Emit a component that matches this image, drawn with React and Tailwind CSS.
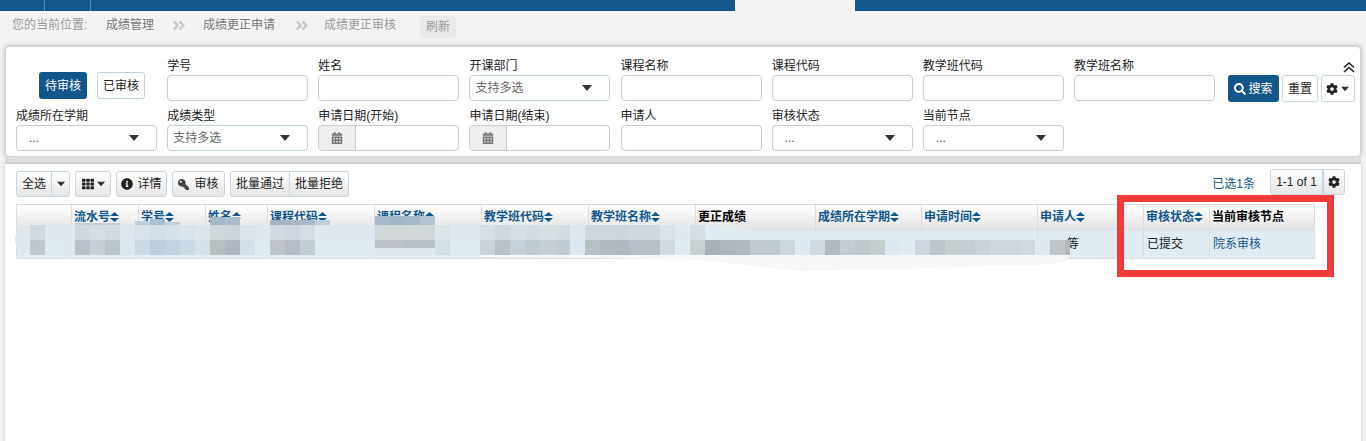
import React from 'react';
import { FaAngleDoubleRight, FaCalendarAlt, FaCog, FaInfoCircle, FaKey, FaSearch, FaTh } from 'react-icons/fa';

const columns = [
  { w: 55 },
  { w: 67, title: '流水号', sort: true },
  { w: 67, title: '学号', sort: true },
  { w: 62, title: '姓名', sort: true },
  { w: 107, title: '课程代码', sort: true },
  { w: 107, title: '课程名称', sort: true },
  { w: 107, title: '教学班代码', sort: true },
  { w: 107, title: '教学班名称', sort: true },
  { w: 120, title: '更正成绩' },
  { w: 106, title: '成绩所在学期', sort: true },
  { w: 116, title: '申请时间', sort: true },
  { w: 106, title: '申请人', sort: true },
  { w: 66, title: '审核状态', sort: true },
  { w: 105, title: '当前审核节点' },
];

// mosaic that hides the personal data, one colour per 15px block, starting at x=30
const mosaic = [
  '#bfc7ca', '#dfeaf1', '#e0e9ef', '#b9c1cb', '#c5cfd5', '#bcc4cc', '#dbe7ef', '#cbd9e2', '#bdcfdc', '#c2d4df',
  '#c9dae5', '#d5e0e8', '#b8bfc1', '#b0b8c2', '#d3dfe8', '#e0eaf1', '#bfc3cc', '#b6bcc9', '#c3ced4', '#e0eaf1',
  '#e0eaf1', '#e0eaf1', '#e0eaf1', '#bcc2c8', '#bcc2c8', '#b8bec5', '#b8c0c6', '#d5dfe6', '#e0eaf1', '#e0eaf1',
  '#c9d2d9', '#b9c1c9', '#c5d0d9', '#bfcad3', '#c6d0d2', '#c2cbd3', '#dce8ef',
  '#b8c0c3', '#b2bdc3', '#b0babe', '#b8bfca', '#b8c0c6', '#cfdae1', '#e0ebf2', '#c7d1d3', '#a9b1b8', '#b0b8be',
  '#b3bbc2', '#c2cbd1', '#c0cbd1', '#cdd7dc', '#deeaf1', '#d0d9e0', '#b4bbc3', '#c2ccd4', '#c0c9d0', '#c5cdce',
  '#deeaf1', '#e0ebf2', '#cdd6de', '#bcc6cc', '#c5ced1', '#c5ced4', '#c8d2d8', '#cdd7dd', '#ccd6dc', '#cfd9df',
  '#dfe9f0', '#bfc5c8', '#b2b7bd',
];

const mix = (hex) => {
  const ch = [1, 3, 5].map((i) => parseInt(hex.slice(i, i + 2), 16));
  const base = [224, 231, 237];
  return `rgb(${ch.map((c, i) => Math.round(c * 0.4 + base[i] * 0.6)).join(',')})`;
};

const headerBlocks = [
  [75, 223, 45, 2, '#c3d0da'],
  [135, 221, 15, 4, '#bccfdb'],
  [150, 219, 15, 6, '#a9bfcd'],
  [165, 222, 15, 3, '#c3d3de'],
  [180, 225, 15, 0, '#dfe6ec'],
  [210, 217, 15, 8, '#a5b8c6'],
  [225, 217, 15, 8, '#acbcca'],
  [270, 220, 15, 5, '#a3b4c4'],
  [285, 220, 15, 5, '#a7b7c6'],
  [300, 220, 15, 5, '#a9b8c6'],
  [315, 220, 15, 5, '#bfced8'],
  [375, 216, 15, 9, '#a9bac8'],
  [390, 216, 15, 9, '#a0b5c6'],
  [405, 216, 15, 9, '#a7b9c6'],
  [420, 216, 15, 9, '#b3c4ce'],
];

function Caret({ className = '' }) {
  return (
    <svg width="10" height="6" viewBox="0 0 12 7" className={className}>
      <polygon points="0,0 12,0 6,7" fill="#333" />
    </svg>
  );
}

function SortIcon() {
  return (
    <svg width="9" height="10" viewBox="0 0 9 10" className="shrink-0">
      <polygon points="4.5,0 9,4 0,4" fill="#12568a" />
      <polygon points="0,6 9,6 4.5,10" fill="#12568a" />
    </svg>
  );
}

function Field({ label, children }) {
  return (
    <div className="h-[44px]">
      <div className="h-[18px] text-[12px] leading-[18px] text-[#222]">{label}</div>
      {children}
    </div>
  );
}

function TextInput() {
  return <div className="h-[26px] rounded border border-[#ccc] bg-white" />;
}

function SelectBox({ text, multi }) {
  return (
    <div className={`flex h-[26px] items-center justify-between rounded border bg-white pr-[17px] text-[12px] ${multi ? 'border-[#c0d2e0] pl-[5px] text-[#666]' : 'border-[#ccc] pl-[12px] text-[#444]'}`}>
      <span>{text}</span>
      <Caret />
    </div>
  );
}

function DateInput() {
  return (
    <div className="flex h-[26px] rounded border border-[#ccc] bg-white">
      <div className="flex w-[37px] items-center justify-center rounded-l border-r border-[#ccc] bg-[#eee]">
        <FaCalendarAlt className="text-[12px] text-[#777]" />
      </div>
    </div>
  );
}

function ToolButton({ children, className = '' }) {
  return (
    <div className={`flex h-[26px] items-center justify-center border border-[#c8d6e0] bg-gradient-to-b from-white to-[#e6e6e6] text-[12px] text-[#222] ${className}`}>
      {children}
    </div>
  );
}

function Breadcrumb() {
  return (
    <div className="flex h-[35px] items-start pl-[12px] pt-[6px] text-[12px] leading-[16px] text-[#999]">
      <span className="w-[94px]">您的当前位置:</span>
      <span className="w-[48px] text-[#777]">成绩管理</span>
      <FaAngleDoubleRight className="ml-[18px] mt-px w-[14px] text-[15px] text-[#c8c8c8]" />
      <span className="ml-[17px] text-[#777]">成绩更正申请</span>
      <FaAngleDoubleRight className="ml-[20px] mt-px w-[14px] text-[15px] text-[#c8c8c8]" />
      <span className="ml-[15px]">成绩更正审核</span>
      <span className="ml-[24px] -mt-px flex h-[22px] w-[36px] items-center justify-center rounded bg-[#eaeaea]">刷新</span>
    </div>
  );
}

function FilterPanel() {
  return (
    <div className="mx-[5px] flex h-[111px] rounded-sm border border-[#d4d4d4] bg-white pl-[10px] pt-[10px] shadow-[0_0_5px_rgba(0,0,0,0.25)]">
      <div className="grid grid-cols-[repeat(8,141px)] gap-x-[10.15px] gap-y-[6px] content-start">
        <div className="flex h-[44px] items-start justify-end gap-[10px] pr-[12px] pt-[15px]">
          <div className="flex h-[27px] w-[48px] items-center justify-center rounded-[3px] bg-[#12568a] text-[12px] text-white">待审核</div>
          <div className="flex h-[27px] w-[48px] items-center justify-center rounded-[3px] border border-[#c0d2e0] text-[12px] text-[#222]">已审核</div>
        </div>
        <Field label="学号"><TextInput /></Field>
        <Field label="姓名"><TextInput /></Field>
        <Field label="开课部门"><SelectBox text="支持多选" multi /></Field>
        <Field label="课程名称"><TextInput /></Field>
        <Field label="课程代码"><TextInput /></Field>
        <Field label="教学班代码"><TextInput /></Field>
        <Field label="教学班名称"><TextInput /></Field>
        <Field label="成绩所在学期"><SelectBox text="..." /></Field>
        <Field label="成绩类型"><SelectBox text="支持多选" multi /></Field>
        <Field label="申请日期(开始)"><DateInput /></Field>
        <Field label="申请日期(结束)"><DateInput /></Field>
        <Field label="申请人"><TextInput /></Field>
        <Field label="审核状态"><SelectBox text="..." /></Field>
        <Field label="当前节点"><SelectBox text="..." /></Field>
      </div>
      <div className="ml-[13px] flex w-[127px] flex-col items-end">
        <svg width="12" height="11" viewBox="0 0 12 11" className="mb-[2px] mt-[5px]">
          <path d="M1 5.5 L6 1 L11 5.5 M1 10 L6 5.5 L11 10" fill="none" stroke="#222" strokeWidth="1.6" />
        </svg>
        <div className="flex gap-[3px]">
          <div className="flex h-[27px] w-[51px] items-center justify-center gap-[2px] rounded-[3px] bg-[#12568a] text-[12px] text-white">
            <FaSearch className="text-[12px]" />搜索
          </div>
          <div className="flex h-[27px] w-[36px] items-center justify-center rounded-[3px] border border-[#c8d6e0] text-[12px] text-[#222]">重置</div>
          <div className="flex h-[27px] w-[34px] items-center justify-center gap-[3px] rounded-[3px] border border-[#c8d6e0] text-[#222]">
            <FaCog className="text-[12px]" />
            <Caret className="w-[8px]" />
          </div>
        </div>
      </div>
    </div>
  );
}

function Toolbar() {
  return (
    <div className="flex h-[28px] items-start text-[12px]">
      <div className="mt-[2px] flex">
        <ToolButton className="w-[36px] rounded-l-[3px]">全选</ToolButton>
        <ToolButton className="-ml-px w-[19px] rounded-r-[3px]"><Caret className="w-[8px]" /></ToolButton>
        <ToolButton className="ml-[5px] w-[36px] gap-[3px] rounded-[3px]">
          <FaTh className="text-[12px]" />
          <Caret className="w-[8px]" />
        </ToolButton>
        <ToolButton className="ml-[5px] w-[51px] gap-[4px] rounded-[3px]">
          <FaInfoCircle className="text-[12px]" />详情
        </ToolButton>
        <ToolButton className="ml-[5px] w-[53px] gap-[5px] rounded-[3px]">
          <FaKey className="-scale-x-100 text-[11px] text-[#444]" />审核
        </ToolButton>
        <ToolButton className="ml-[5px] w-[60px] rounded-l-[3px]">批量通过</ToolButton>
        <ToolButton className="-ml-px w-[60px] rounded-r-[3px]">批量拒绝</ToolButton>
      </div>
      <div className="ml-auto flex items-start pr-[5px]">
        <span className="mr-[15px] mt-[6px] text-[#12568a]">已选1条</span>
        <ToolButton className="w-[53px] rounded-l-[3px]">1-1 of 1</ToolButton>
        <ToolButton className="w-[22px] rounded-r-[3px]"><FaCog className="text-[12px]" /></ToolButton>
      </div>
    </div>
  );
}

function DataTable() {
  return (
    <table className="mt-[7px] w-[1299px] table-fixed border-collapse text-[12px]">
      <colgroup>
        {columns.map((col, i) => <col key={i} style={{ width: col.w }} />)}
      </colgroup>
      <thead>
        <tr className="h-[25px] bg-gradient-to-b from-white to-[#e4e4e4]">
          {columns.map((col, i) => (
            <th key={i} className="border border-[#ddd] pl-[2px] text-left font-bold">
              <span className={`flex items-center whitespace-nowrap ${col.sort ? 'text-[#12568a]' : 'text-black'}`}>
                {col.title}
                {col.sort && <SortIcon />}
              </span>
            </th>
          ))}
        </tr>
      </thead>
      <tbody>
        <tr className="h-[29px] bg-[#e0ebf2] text-[#222]">
          {columns.map((col, i) => (
            <td key={i} className="border border-[#ddd] px-[3px] whitespace-nowrap">
              {col.title === '申请人' && <span className="pl-[26px]">等</span>}
              {col.title === '审核状态' && '已提交'}
              {col.title === '当前审核节点' && <span className="text-[#12568a]">院系审核</span>}
            </td>
          ))}
        </tr>
      </tbody>
    </table>
  );
}

function Mosaic() {
  return (
    <svg width="1366" height="441" className="pointer-events-none absolute left-0 top-0">
      <polygon points="480,255 1070,255 1066,262 1040,265 1000,265 960,267 900,269 800,271 700,260 600,258 480,257" fill="#f5f7f9" />
      <path d="M30 225 H700 V255 H30 Q15 250 15 240 Q15 228 30 225 Z" fill="#e0e7ed" />
      <polygon points="700,225 780,232 1000,235 1070,240 1070,255 700,255" fill="#e0ebf2" />
      {mosaic.map((c, i) => {
        const x = 30 + i * 15;
        return (
          <g key={i}>
            {x < 700 && <rect x={x} y="225" width="15" height="15" fill={mix(c)} />}
            <rect x={x} y="240" width={x === 1065 ? 5 : 15} height={x >= 375 && x < 435 ? 8 : 15} fill={c} />
          </g>
        );
      })}
      {headerBlocks.map(([x, y, w, h, c]) => <rect key={x} x={x} y={y} width={w} height={h} fill={c} />)}
      <rect x="375" y="225" width="60" height="15" fill="#d2d8da" />
    </svg>
  );
}

export default function App() {
  return (
    <div className="relative h-[441px] w-[1366px] overflow-hidden bg-[#f3f3f3] font-['Liberation_Sans','Noto_Sans_CJK_SC',sans-serif]">
      {/* top nav strip */}
      <div className="flex h-[11px]">
        <div className="flex w-[735px] bg-[#12568a]">
          <div className="w-[45px] border-r border-[#5d8bad]" />
          <div className="w-[46px] border-r border-[#5d8bad]" />
        </div>
        <div className="w-[120px]" />
        <div className="flex-1 bg-[#12568a]" />
      </div>

      <Breadcrumb />
      <FilterPanel />
      <div className="mx-[5px] h-[7px] bg-[#dedede]" />

      <div className="mx-[5px] h-[300px] bg-white px-[11px] pt-[5px] shadow-[0_0_4px_rgba(0,0,0,0.2)]">
        <Toolbar />
        <DataTable />
      </div>

      <Mosaic />
      {/* red annotation box drawn over the screenshot */}
      <div className="absolute left-[1117px] top-[195px] h-[82px] w-[217px] border-[7px] border-[#f33a3a]" />
    </div>
  );
}
